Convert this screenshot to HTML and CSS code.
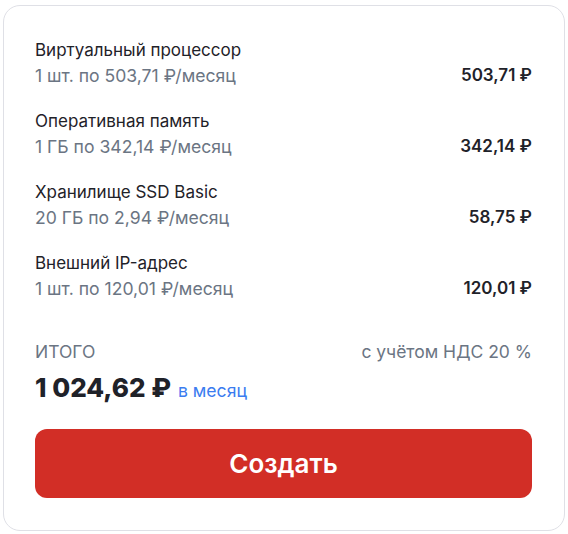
FILE: index.html
```html
<!DOCTYPE html>
<html lang="ru">
<head>
<meta charset="utf-8">
<link rel="stylesheet" href="styles.css">
</head>
<body>
<div class="card">
  <div class="items">
    <div class="item">
      <div class="item-text">
        <div class="item-title">Виртуальный процессор</div>
        <div class="item-sub">1 шт. по 503,71 ₽/месяц</div>
      </div>
      <div class="item-price">503,71 ₽</div>
    </div>
    <div class="item">
      <div class="item-text">
        <div class="item-title">Оперативная память</div>
        <div class="item-sub">1 ГБ по 342,14 ₽/месяц</div>
      </div>
      <div class="item-price">342,14 ₽</div>
    </div>
    <div class="item">
      <div class="item-text">
        <div class="item-title">Хранилище SSD Basic</div>
        <div class="item-sub">20 ГБ по 2,94 ₽/месяц</div>
      </div>
      <div class="item-price">58,75 ₽</div>
    </div>
    <div class="item">
      <div class="item-text">
        <div class="item-title">Внешний IP-адрес</div>
        <div class="item-sub">1 шт. по 120,01 ₽/месяц</div>
      </div>
      <div class="item-price">120,01 ₽</div>
    </div>
  </div>
  <div class="total-head">
    <span class="total-label">ИТОГО</span>
    <span class="total-vat">с учётом НДС 20 %</span>
  </div>
  <div class="total">
    <span class="total-sum">1 024,62 ₽</span>
    <span class="total-period">в месяц</span>
  </div>
  <button class="create">Создать</button>
</div>
</body>
</html>
```

FILE: styles.css
```css
html, body {
  margin: 0;
  padding: 0;
  background: #ffffff;
}
body {
  font-family: Inter, "Noto Sans", sans-serif;
  color: #1f2229;
}
.card {
  margin: 5px 3px 3px 3px;
  border: 1px solid #dfe0e6;
  border-radius: 17px;
  padding: 32px 32px 32px 31px;
  box-sizing: border-box;
  height: 526px;
}
.items {
  display: flex;
  flex-direction: column;
  gap: 21px;
}
.item {
  display: flex;
  justify-content: space-between;
  align-items: flex-end;
}
.item-title {
  font-size: 17px;
  line-height: 25px;
  color: #1f2229;
}
.item-sub {
  font-size: 17.6px;
  line-height: 25px;
  color: #6b7583;
}
.item-price {
  font-size: 17px;
  line-height: 25px;
  font-weight: 600;
  color: #1f2229;
}
.total-head {
  margin-top: 39px;
  display: flex;
  justify-content: space-between;
  font-size: 17.5px;
  line-height: 24px;
  color: #6b7583;
}
.total {
  margin-top: 8px;
  display: flex;
  align-items: baseline;
  gap: 7px;
  line-height: 32px;
}
.total-sum {
  font-size: 26px;
  font-weight: 800;
  color: #1f2229;
}
.total-period {
  font-size: 17.6px;
  color: #3b7cf0;
}
.create {
  margin-top: 22px;
  display: block;
  width: 100%;
  height: 69px;
  border: none;
  border-radius: 12px;
  background: #d22e26;
  color: #ffffff;
  font-family: Inter, "Noto Sans", sans-serif;
  font-size: 26px;
  font-weight: 600;
  cursor: pointer;
}
```
